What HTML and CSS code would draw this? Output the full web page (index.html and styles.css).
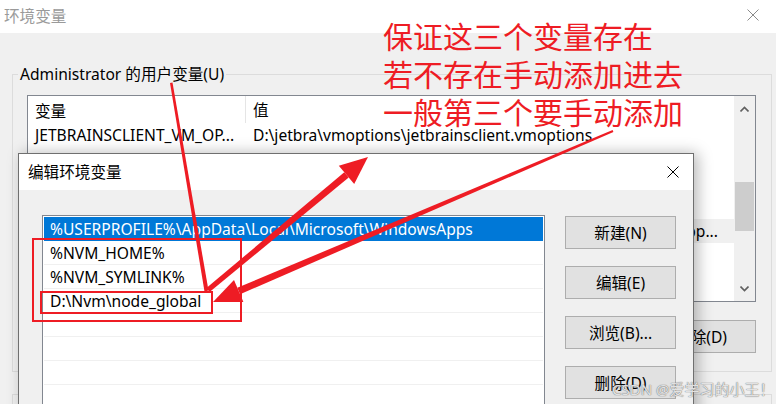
FILE: index.html
```html
<!DOCTYPE html>
<html lang="zh-CN">
<head>
  <meta charset="utf-8">
  <title>环境变量</title>
  <link rel="stylesheet" href="styles.css">
</head>
<body>
  <!-- background window -->
  <div class="win">
    <div class="titlebar">
      <span class="title dim">环境变量</span>
      <svg class="x dim-x" width="12" height="12" viewBox="0 0 12 12"><path d="M0.5 0.5L11.5 11.5M11.5 0.5L0.5 11.5"/></svg>
    </div>

    <fieldset class="group">
      <legend>Administrator 的用户变量(U)</legend>
      <div class="listview">
        <div class="lv-main">
          <div class="lv-row lv-head"><span class="c1">变量</span><span class="c2">值</span></div>
          <div class="lv-row"><span class="c1">JETBRAINSCLIENT_VM_OP...</span><span class="c2">D:\jetbra\vmoptions\jetbrainsclient.vmoptions</span></div>
          <div class="lv-row"><span class="c1">NVM_HOME</span><span class="c2">D:\Nvm\nvm</span></div>
          <div class="lv-row"><span class="c1">NVM_SYMLINK</span><span class="c2">D:\Nvm\nodejs</span></div>
          <div class="lv-row"><span class="c1">OneDrive</span><span class="c2">C:\Users\Administrator\OneDrive</span></div>
          <div class="lv-row sel"><span class="c1">Path</span><span class="c2">D:\js;%USERPROFILE%\AppData\Local\Microsoft\WindowsApp...</span></div>
        </div>
        <div class="vscroll">
          <svg class="chev" width="9" height="6" viewBox="0 0 9 6"><path d="M0.5 5.5L4.5 1.5L8.5 5.5"/></svg>
          <div class="track"><div class="thumb"></div></div>
          <svg class="chev" width="9" height="6" viewBox="0 0 9 6"><path d="M0.5 0.5L4.5 4.5L8.5 0.5"/></svg>
        </div>
      </div>
      <div class="btn-row">
        <button class="btn">新建(N)...</button>
        <button class="btn">编辑(E)...</button>
        <button class="btn">删除(D)</button>
      </div>
    </fieldset>

    <fieldset class="group">
      <legend>系统变量(S)</legend>
    </fieldset>
  </div>

  <!-- edit dialog on top -->
  <div class="dialog">
    <div class="titlebar dlg-title">
      <span class="title">编辑环境变量</span>
      <svg class="x" width="12" height="12" viewBox="0 0 12 12"><path d="M0.5 0.5L11.5 11.5M11.5 0.5L0.5 11.5"/></svg>
    </div>
    <div class="dlg-body">
      <div class="pathlist">
        <div class="p-row active">%USERPROFILE%\AppData\Local\Microsoft\WindowsApps</div>
        <div class="p-row">%NVM_HOME%</div>
        <div class="p-row">%NVM_SYMLINK%</div>
        <div class="p-row">D:\Nvm\node_global</div>
        <div class="p-row"></div>
        <div class="p-row"></div>
        <div class="p-row"></div>
        <div class="p-row"></div>
      </div>
      <div class="dlg-btns">
        <button class="btn">新建(N)</button>
        <button class="btn">编辑(E)</button>
        <button class="btn">浏览(B)...</button>
        <button class="btn">删除(D)</button>
      </div>
    </div>
  </div>

  <!-- annotations -->
  <div class="note">保证这三个变量存在<br>若不存在手动添加进去<br>一般第三个要手动添加</div>
  <svg class="marks" width="776" height="404" viewBox="0 0 776 404">
    <rect x="33" y="239" width="208" height="82"/>
    <rect x="41" y="292" width="171" height="21"/>
    <polygon class="fill" points="170,83 172.5,82.6 208.5,290.6 204.5,291.4"/>
    <polygon class="fill" points="206.4,288.1 209.6,291.9 348.7,177.6 344.3,172.2"/>
    <polygon class="fill" points="368,157 354.2,184.1 338.8,165.7"/>
    <polygon class="fill" points="612.6,130.1 613.4,131.9 240.1,294.2 237.3,287.8"/>
    <polygon class="fill" points="213,302 243.4,302 234,280"/>
  </svg>
  <div class="wm">CSDN @爱学习的小王！</div>
</body>
</html>
```

FILE: styles.css
```css
/* --- base --- */
*{box-sizing:border-box}
body{margin:0;width:776px;height:404px;overflow:hidden;position:relative;background:#f0f0f0;font:15.6px "Noto Sans","Noto Sans CJK SC",sans-serif;color:#000}

/* --- window chrome --- */
.titlebar{height:33px;background:#fff;display:flex;align-items:center;justify-content:space-between;padding:0 17px 3px 4px}
.title{font-size:15.6px}
.dim{color:#9a9a9a}
.x path{stroke:#000;stroke-width:1;fill:none}
.dim-x path{stroke:#8a8a8a}

/* --- group boxes --- */
.group{margin:31px 4px 0 12px;border:1px solid #dcdcdc;padding:11px 15px 18px 14px;min-width:0}
.group + .group{margin-top:12px;height:40px}
.group legend{padding:0 2px;margin-left:-9px;line-height:20px}

/* --- list view --- */
.listview{height:207px;border:1px solid #828790;background:#fff;display:flex}
.lv-main{flex:1;min-width:0;overflow:hidden;padding-top:2px}
.lv-row{display:flex;height:24px;align-items:center;white-space:nowrap}
.lv-head{height:27px;margin-top:-2px}
.lv-head .c1{border-right:1px solid #e5e5e5;height:27px;line-height:30px}
.lv-head .c2{line-height:30px}
.c1{width:218px;padding-left:7px;overflow:hidden;text-overflow:ellipsis;flex:none}
.c2{flex:1;min-width:0;padding-left:7px;overflow:hidden;text-overflow:ellipsis}
.lv-row.sel{background:#f0f0f0}
.vscroll{width:21px;background:#f0f0f0;display:flex;flex-direction:column;align-items:center;padding:10px 0 9px}
.chev path{stroke:#606060;stroke-width:1.6;fill:none}
.track{flex:1;width:100%;padding:70px 1px 0}
.thumb{height:49px;background:#cdcdcd}

.btn-row{display:flex;justify-content:flex-end;gap:17px;margin-top:18px}
.btn{height:33px;background:#e1e1e1;border:1px solid #adadad;font:15.6px "Noto Sans","Noto Sans CJK SC",sans-serif;color:#000;padding:0;width:111px}
.btn-row .btn{width:110px;height:33px}

/* --- edit dialog --- */
.dialog{position:absolute;left:18px;top:153px;width:676px;height:280px;border:1px solid #6f6f6f;background:#f0f0f0;box-shadow:4px 0 14px rgba(0,0,0,.28)}
.dlg-title{height:36px;padding:0 14px 1px 9px}
.dlg-body{display:flex;padding:25px 17px 0 23px;gap:20px}
.pathlist{width:503px;height:220px;border:1px solid #828790;background:#fff;padding:1px}
.p-row{height:24px;line-height:24px;padding-left:6px;border-bottom:1px solid #f0f0f0;white-space:nowrap}
.p-row.active{background:#0078d7;color:#fff;border-bottom-color:#0078d7}
.dlg-btns{display:flex;flex-direction:column;gap:17px;padding-top:1px}

/* --- annotations --- */
.note{position:absolute;left:383px;top:16px;font:30px/38px "Noto Sans CJK SC",sans-serif;color:#ee1c24}
.marks{position:absolute;left:0;top:0;pointer-events:none}
.marks rect{fill:none;stroke:#ee1c24;stroke-width:2}
.marks .fill{fill:#ee1c24}
.wm{position:absolute;left:612px;top:378px;font:15px "Noto Sans","Noto Sans CJK SC",sans-serif;color:rgba(255,255,255,.8);text-shadow:0 0 1px #777,0 0 1px #777}
```
